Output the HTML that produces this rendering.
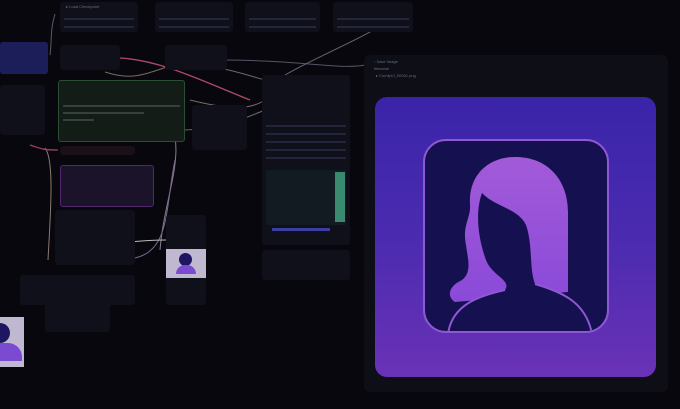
<!DOCTYPE html>
<html><head><style>
body{margin:0;width:680px;height:409px;background:#07070d;overflow:hidden;position:relative;font-family:"Liberation Sans",sans-serif}
.n{position:absolute;background:#0f1019;border-radius:3px}
.h{position:absolute;left:4px;right:4px;height:2px;background:#23253a}
.t{position:absolute;font-size:4px;color:#6a6c80;white-space:nowrap}
</style></head><body>
<svg width="680" height="409" style="position:absolute;left:0;top:0" viewBox="0 0 680 409">
<g fill="none" stroke-width="1">
<path d="M120 58 C160 60 200 80 250 100" stroke="#b04a6a" stroke-width="1.3"/>
<path d="M55 14 C50 30 52 40 50 55" stroke="#5a5a68"/>
<path d="M105 72 C130 80 140 76 170 66" stroke="#7a6a5a"/>
<path d="M215 67 C240 72 250 76 265 80" stroke="#6a6a78"/>
<path d="M220 60 C300 60 340 70 365 65" stroke="#555566"/>
<path d="M285 75 C320 55 360 40 390 20" stroke="#666677"/>
<path d="M45 148 C55 160 50 220 48 260" stroke="#8a7a70"/>
<path d="M165 110 C190 150 165 190 160 250" stroke="#8a7a90"/>
<path d="M190 100 C230 110 250 110 265 100" stroke="#7a6a6a"/>
<path d="M180 130 C220 130 240 120 265 110" stroke="#6a6a70"/>
<path d="M135 258 C170 250 165 210 175 160" stroke="#7a6a88"/>
<path d="M130 242 C150 240 160 240 166 240" stroke="#bbb"/>
<path d="M30 145 C40 148 40 150 58 150" stroke="#a04060" stroke-width="1.3"/>
</g>
</svg>
<div class="n" style="left:60px;top:2px;width:78px;height:30px"><div class="t" style="left:6px;top:2px">▸ Load Checkpoint</div><div class="h" style="top:16px"></div><div class="h" style="top:24px"></div></div>
<div class="n" style="left:155px;top:2px;width:78px;height:30px"><div class="h" style="top:16px"></div><div class="h" style="top:24px"></div></div>
<div class="n" style="left:245px;top:2px;width:75px;height:30px"><div class="h" style="top:16px"></div><div class="h" style="top:24px"></div></div>
<div class="n" style="left:333px;top:2px;width:80px;height:30px"><div class="h" style="top:16px"></div><div class="h" style="top:24px"></div></div>
<div class="n" style="left:0;top:42px;width:48px;height:32px;background:#1c1e5a"></div>
<div class="n" style="left:60px;top:45px;width:60px;height:25px"></div>
<div class="n" style="left:165px;top:45px;width:62px;height:25px"></div>
<div class="n" style="left:0;top:85px;width:45px;height:50px"></div>
<div class="n" style="left:58px;top:80px;width:125px;height:60px;background:#131c17;border:1px solid #2a4e31"><div class="h" style="top:24px;background:#34423a"></div><div class="h" style="top:31px;background:#34423a;right:40px"></div><div class="h" style="top:38px;background:#34423a;right:90px"></div></div>
<div class="n" style="left:60px;top:146px;width:75px;height:9px;background:#1a1017"></div>
<div class="n" style="left:60px;top:165px;width:92px;height:40px;background:#1a1329;border:1px solid #52276f"></div>
<div class="n" style="left:55px;top:210px;width:80px;height:55px"></div>
<div class="n" style="left:192px;top:105px;width:55px;height:45px"></div>
<div class="n" style="left:262px;top:75px;width:88px;height:170px"><div class="h" style="top:50px"></div><div class="h" style="top:58px"></div><div class="h" style="top:66px"></div><div class="h" style="top:74px"></div><div class="h" style="top:82px"></div></div>
<div style="position:absolute;left:266px;top:170px;width:80px;height:55px;background:#121a22"></div>
<div style="position:absolute;left:335px;top:172px;width:10px;height:50px;background:#3a8a70"></div>
<div style="position:absolute;left:272px;top:228px;width:58px;height:3px;background:#3a3ea0"></div>
<div class="n" style="left:262px;top:250px;width:88px;height:30px"></div>
<div class="n" style="left:166px;top:215px;width:40px;height:90px"></div>
<div style="position:absolute;left:166px;top:249px;width:40px;height:29px;background:#c0b8d0"><div style="position:absolute;left:13px;top:4px;width:13px;height:13px;border-radius:50%;background:#1e1660"></div><div style="position:absolute;left:10px;top:16px;width:20px;height:9px;border-radius:9px 9px 0 0;background:#7a4ad0"></div></div>
<div class="n" style="left:20px;top:275px;width:115px;height:30px"></div>
<div class="n" style="left:45px;top:300px;width:65px;height:32px"></div>
<div style="position:absolute;left:0;top:317px;width:24px;height:50px;background:#c0b8d0;overflow:hidden"><div style="position:absolute;left:-10px;top:6px;width:20px;height:20px;border-radius:50%;background:#1e1660"></div><div style="position:absolute;left:-14px;top:26px;width:36px;height:18px;border-radius:14px 14px 0 0;background:#7a4ad0"></div></div>
<div class="n" style="left:364px;top:55px;width:304px;height:337px;background:#0d0e16;border-radius:6px"><div class="t" style="left:10px;top:4px">◦ Save Image</div><div class="t" style="left:10px;top:11px">filename</div><div class="t" style="left:12px;top:18px">▸ ComfyUI_00001.png</div></div>
<div style="position:absolute;left:375px;top:97px;width:281px;height:280px;border-radius:12px;background:linear-gradient(180deg,#3a24a8 0%,#4a2bb0 50%,#6a32b6 100%)"></div>
<svg width="680" height="409" style="position:absolute;left:0;top:0" viewBox="0 0 680 409">
<defs><linearGradient id="g" x1="0" y1="0" x2="0" y2="1"><stop offset="0" stop-color="#a25ad8"/><stop offset="1" stop-color="#8a4ad8"/></linearGradient></defs>
<rect x="424" y="140" width="184" height="192" rx="22" fill="#15104f" stroke="#8e58d2" stroke-width="2"/>
<clipPath id="c"><rect x="425" y="141" width="182" height="190" rx="21"/></clipPath>
<g clip-path="url(#c)">
<path d="M470 205 C468 172 492 156 517 157 C550 158 568 182 568 212 L568 292 L455 302 C446 296 449 286 462 280 C472 272 468 260 466 245 C462 225 471 218 470 205 Z" fill="url(#g)"/>
<path d="M482 193 C495 207 518 208 526 225 C533 245 529 268 535 284 C562 292 586 302 592 334 L448 334 C452 305 478 296 505 290 C512 280 492 276 486 260 C478 238 475 212 482 193 Z" fill="#15104f"/>
<path d="M448 334 C452 305 478 296 505 290 M535 284 C562 292 586 302 592 334" fill="none" stroke="#8e58d2" stroke-width="2"/>
</g>
</svg>
</body></html>
